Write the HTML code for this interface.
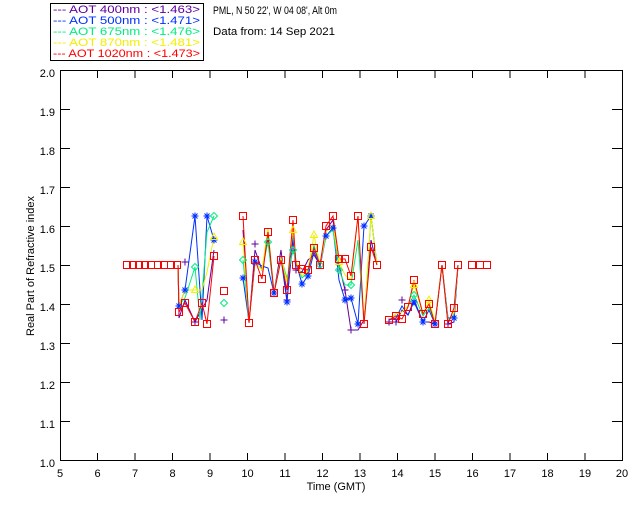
<!DOCTYPE html>
<html><head><meta charset="utf-8"><style>
body{margin:0;background:#fff;width:640px;height:512px;overflow:hidden}
svg text{font-family:"Liberation Sans",sans-serif;font-size:11px}
</style></head><body>
<svg width="640" height="512" viewBox="0 0 640 512" xmlns="http://www.w3.org/2000/svg">
<defs>
<path id="st" d="M-3.5 0h7M0 -3.5v7M-2.5 -2.5l5 5M2.5 -2.5l-5 5" stroke="#0030ff" fill="none"/>
<path id="pl" d="M-3.5 0h7M0 -3.5v7" stroke="#6000a0" fill="none"/>
<path id="dm" d="M0 -3.5l3.5 3.5l-3.5 3.5l-3.5 -3.5z" stroke="#00ee80" fill="none"/>
<path id="tr" d="M0 -4l3.5 6.5h-7z" stroke="#f0f000" fill="none"/>
</defs>
<rect x="50.5" y="3.5" width="153" height="57" fill="none" stroke="#000"/>
<g font-size="10" xml:space="preserve">
<text x="53" y="13" fill="#6000a0" textLength="147" lengthAdjust="spacingAndGlyphs">--- AOT  400nm : &lt;1.463&gt;</text>
<text x="53" y="24" fill="#0030ff" textLength="147" lengthAdjust="spacingAndGlyphs">--- AOT  500nm : &lt;1.471&gt;</text>
<text x="53" y="35" fill="#00ee80" textLength="147" lengthAdjust="spacingAndGlyphs">--- AOT  675nm : &lt;1.476&gt;</text>
<text x="53" y="46" fill="#f0f000" textLength="147" lengthAdjust="spacingAndGlyphs">--- AOT  870nm : &lt;1.481&gt;</text>
<text x="53" y="57" fill="#ff0000" textLength="147" lengthAdjust="spacingAndGlyphs">--- AOT 1020nm : &lt;1.473&gt;</text>
<text x="213" y="14" fill="#000" textLength="124" lengthAdjust="spacingAndGlyphs">PML, N 50 22', W 04 08', Alt 0m</text>
<text x="213" y="35" fill="#000" textLength="122" lengthAdjust="spacingAndGlyphs">Data from: 14 Sep 2021</text>
</g>
<rect x="60.5" y="70.5" width="562" height="390" fill="none" stroke="#000"/>
<g stroke="#000">
<path d="M97.5 461v-8M97.5 70v8M135 461v-8M135 70v8M172.5 461v-8M172.5 70v8M210 461v-8M210 70v8M247.5 461v-8M247.5 70v8M285 461v-8M285 70v8M322.5 461v-8M322.5 70v8M360 461v-8M360 70v8M397.5 461v-8M397.5 70v8M435 461v-8M435 70v8M472.5 461v-8M472.5 70v8M510 461v-8M510 70v8M547.5 461v-8M547.5 70v8M585 461v-8M585 70v8"/>
<path d="M60 109.5h10M622 109.5h-10M60 148.5h10M622 148.5h-10M60 187.5h10M622 187.5h-10M60 226.5h10M622 226.5h-10M60 265.5h10M622 265.5h-10M60 304.5h10M622 304.5h-10M60 343.5h10M622 343.5h-10M60 382.5h10M622 382.5h-10M60 421.5h10M622 421.5h-10"/>
</g>
<g fill="#000" text-anchor="middle">
<text x="60" y="477">5</text><text x="97.5" y="477">6</text><text x="135" y="477">7</text><text x="172.5" y="477">8</text><text x="210" y="477">9</text><text x="247.5" y="477">10</text><text x="285" y="477">11</text><text x="322.5" y="477">12</text><text x="360" y="477">13</text><text x="397.5" y="477">14</text><text x="435" y="477">15</text><text x="472.5" y="477">16</text><text x="510" y="477">17</text><text x="547.5" y="477">18</text><text x="585" y="477">19</text><text x="622" y="477">20</text>
<text x="336" y="490">Time (GMT)</text>
</g>
<g fill="#000" text-anchor="end">
<text x="55" y="77">2.0</text><text x="55" y="116">1.9</text><text x="55" y="155">1.8</text><text x="55" y="194">1.7</text><text x="55" y="233">1.6</text><text x="55" y="272">1.5</text><text x="55" y="311">1.4</text><text x="55" y="350">1.3</text><text x="55" y="389">1.2</text><text x="55" y="428">1.1</text><text x="55" y="467">1.0</text>
</g>
<text x="34" y="266" fill="#000" text-anchor="middle" transform="rotate(-90 34 266)">Real Part of Refractive index</text>
<g fill="none" stroke-width="1">
<polyline stroke="#6000a0" points="178,265 179,318 185,300 195,322 207,300 214,250"/>
<polyline stroke="#6000a0" points="243,230 249,322 255,250 262,270 268,240 274,293 281,250 287,300 293,240 296,270 302,272 308,260 314,255 320,265 326,230 333,220 339,265 345,290 351,330 358,330 364,320 371,240 377,265"/>
<polyline stroke="#6000a0" points="389,322 396,322 402,310 408,315 414,300 423,322 429,322 435,324 442,265 448,324 454,322 458,265"/>
<polyline stroke="#0030ff" points="178,265 179,306 185,290 195,216 202,320 207,216 214,240"/>
<polyline stroke="#0030ff" points="243,278 249,322 255,262 262,266 268,268 274,293 281,258 287,302 293,234 296,262 302,284 308,276 314,252 320,267 326,236 333,228 339,280 345,300 351,298 358,324 364,226 371,216 377,265"/>
<polyline stroke="#0030ff" points="389,320 396,318 402,306 408,315 414,302 423,322 429,310 435,324 442,265 448,318 454,318 458,265"/>
<polyline stroke="#00ee80" points="178,265 179,305 185,298 195,267 200,320 207,232 214,216"/>
<polyline stroke="#00ee80" points="243,260 249,322 255,262 262,270 268,242 274,293 281,258 287,278 293,250 296,262 302,278 308,272 314,245 320,265 326,236 333,230 339,270 345,285 351,285 358,240 364,324 371,216 377,265"/>
<polyline stroke="#00ee80" points="389,320 396,314 402,312 408,306 414,295 423,316 429,308 435,322 442,265 448,320 454,316 458,265"/>
<polyline stroke="#f0f000" points="178,265 179,306 185,290 195,290 202,290 207,272 214,237"/>
<polyline stroke="#f0f000" points="243,242 249,322 255,262 262,270 268,228 274,293 281,258 287,282 293,230 296,262 302,276 308,270 314,235 320,265 326,232 333,225 339,262 345,275 351,280 358,216 364,324 371,216 377,265"/>
<polyline stroke="#f0f000" points="389,320 396,314 402,312 408,306 414,285 423,314 429,300 435,322 442,265 448,322 454,312 458,265"/>
<polyline stroke="#ff0000" points="178,265 179,312 185,303 195,322 202,303 207,324 214,256"/>
<polyline stroke="#ff0000" points="243,216 249,323 255,260 262,279 268,232 274,293 281,260 287,290 293,220 296,265 302,269 308,270 314,248 320,265 326,226 333,216 339,259 345,259 351,276 358,216 364,324 371,247 377,265"/>
<polyline stroke="#ff0000" points="389,320 396,316 402,319 408,307 414,280 423,314 429,304 435,324 442,265 448,324 454,308 458,265"/>
</g>
<g>
<use href="#pl" x="185" y="262"/><use href="#pl" x="195" y="322"/><use href="#pl" x="224" y="320"/><use href="#pl" x="255" y="244"/><use href="#pl" x="287" y="300"/><use href="#pl" x="296" y="270"/><use href="#pl" x="351" y="330"/><use href="#pl" x="345" y="290"/><use href="#pl" x="389" y="322"/><use href="#pl" x="396" y="322"/><use href="#pl" x="402" y="300"/><use href="#pl" x="448" y="324"/>
<use href="#st" x="179" y="306"/><use href="#st" x="185" y="290"/><use href="#st" x="195" y="216"/><use href="#st" x="207" y="216"/><use href="#st" x="214" y="240"/><use href="#st" x="243" y="278"/><use href="#st" x="255" y="262"/><use href="#st" x="274" y="293"/><use href="#st" x="287" y="302"/><use href="#st" x="302" y="284"/><use href="#st" x="308" y="276"/><use href="#st" x="326" y="236"/><use href="#st" x="333" y="228"/><use href="#st" x="345" y="300"/><use href="#st" x="351" y="298"/><use href="#st" x="358" y="324"/><use href="#st" x="364" y="226"/><use href="#st" x="371" y="216"/><use href="#st" x="414" y="302"/><use href="#st" x="423" y="322"/><use href="#st" x="435" y="324"/><use href="#st" x="454" y="318"/>
<use href="#dm" x="195" y="267"/><use href="#dm" x="214" y="216"/><use href="#dm" x="243" y="260"/><use href="#dm" x="268" y="242"/><use href="#dm" x="293" y="250"/><use href="#dm" x="320" y="265"/><use href="#dm" x="339" y="270"/><use href="#dm" x="351" y="285"/><use href="#dm" x="224" y="303"/><use href="#dm" x="414" y="295"/>
<use href="#tr" x="195" y="290"/><use href="#tr" x="214" y="237"/><use href="#tr" x="243" y="242"/><use href="#tr" x="293" y="230"/><use href="#tr" x="314" y="235"/><use href="#tr" x="339" y="262"/><use href="#tr" x="371" y="216"/><use href="#tr" x="414" y="285"/><use href="#tr" x="429" y="300"/>
</g>
<g fill="none" stroke="#ff0000" stroke-width="1">
<rect x="123.5" y="261.5" width="7" height="7"/><rect x="129.5" y="261.5" width="7" height="7"/><rect x="135.5" y="261.5" width="7" height="7"/><rect x="141.5" y="261.5" width="7" height="7"/><rect x="147.5" y="261.5" width="7" height="7"/><rect x="154.5" y="261.5" width="7" height="7"/><rect x="160.5" y="261.5" width="7" height="7"/><rect x="167.5" y="261.5" width="7" height="7"/><rect x="173.5" y="261.5" width="7" height="7"/>
<rect x="175.5" y="308.5" width="7" height="7"/><rect x="181.5" y="299.5" width="7" height="7"/><rect x="191.5" y="318.5" width="7" height="7"/><rect x="198.5" y="299.5" width="7" height="7"/><rect x="203.5" y="320.5" width="7" height="7"/><rect x="210.5" y="252.5" width="7" height="7"/><rect x="220.5" y="287.5" width="7" height="7"/>
<rect x="239.5" y="212.5" width="7" height="7"/><rect x="245.5" y="319.5" width="7" height="7"/><rect x="251.5" y="256.5" width="7" height="7"/><rect x="258.5" y="275.5" width="7" height="7"/><rect x="264.5" y="228.5" width="7" height="7"/><rect x="270.5" y="289.5" width="7" height="7"/><rect x="277.5" y="256.5" width="7" height="7"/><rect x="283.5" y="286.5" width="7" height="7"/><rect x="289.5" y="216.5" width="7" height="7"/><rect x="292.5" y="261.5" width="7" height="7"/><rect x="298.5" y="265.5" width="7" height="7"/><rect x="304.5" y="266.5" width="7" height="7"/><rect x="310.5" y="244.5" width="7" height="7"/><rect x="316.5" y="261.5" width="7" height="7"/><rect x="322.5" y="222.5" width="7" height="7"/><rect x="329.5" y="212.5" width="7" height="7"/><rect x="335.5" y="255.5" width="7" height="7"/><rect x="341.5" y="255.5" width="7" height="7"/><rect x="347.5" y="272.5" width="7" height="7"/><rect x="354.5" y="212.5" width="7" height="7"/><rect x="360.5" y="320.5" width="7" height="7"/><rect x="367.5" y="243.5" width="7" height="7"/><rect x="373.5" y="261.5" width="7" height="7"/>
<rect x="385.5" y="316.5" width="7" height="7"/><rect x="392.5" y="312.5" width="7" height="7"/><rect x="398.5" y="315.5" width="7" height="7"/><rect x="404.5" y="303.5" width="7" height="7"/><rect x="410.5" y="276.5" width="7" height="7"/><rect x="419.5" y="310.5" width="7" height="7"/><rect x="425.5" y="300.5" width="7" height="7"/><rect x="431.5" y="320.5" width="7" height="7"/><rect x="438.5" y="261.5" width="7" height="7"/><rect x="444.5" y="320.5" width="7" height="7"/><rect x="450.5" y="304.5" width="7" height="7"/><rect x="454.5" y="261.5" width="7" height="7"/><rect x="468.5" y="261.5" width="7" height="7"/><rect x="476.5" y="261.5" width="7" height="7"/><rect x="483.5" y="261.5" width="7" height="7"/>
</g>
</svg>
</body></html>
